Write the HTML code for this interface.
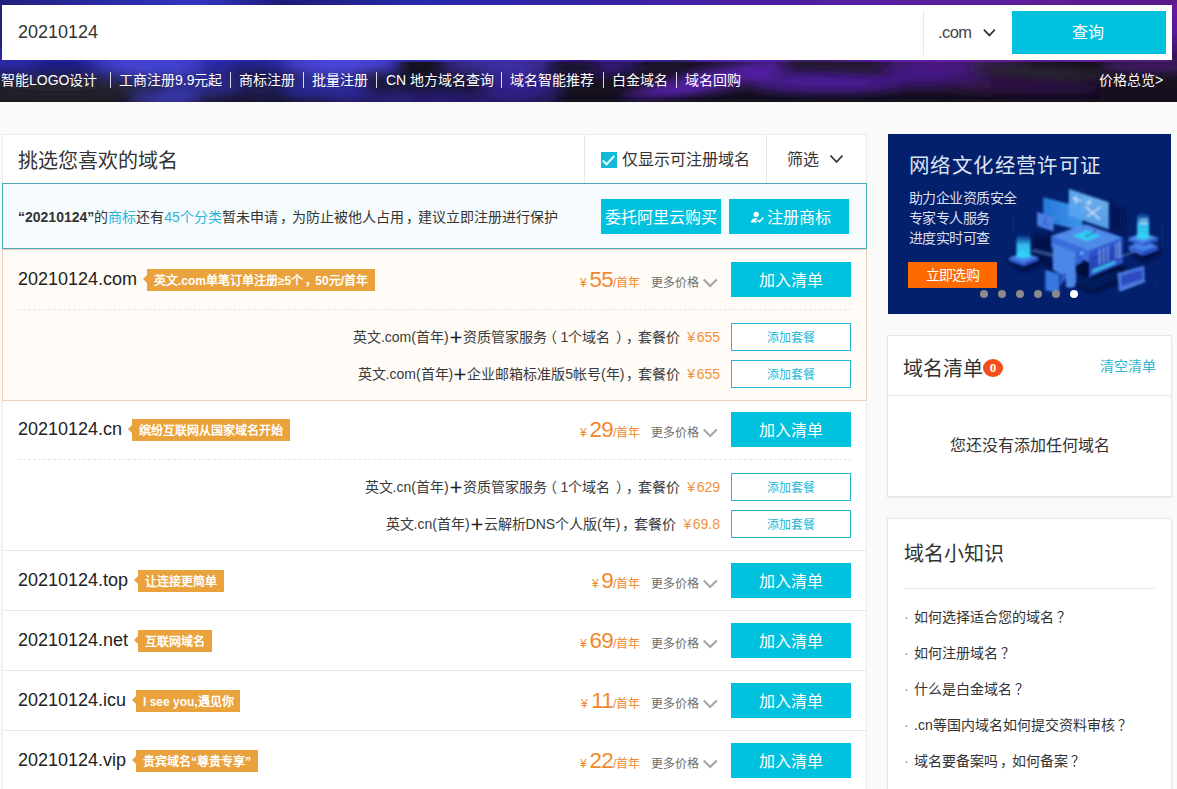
<!DOCTYPE html>
<html lang="zh-CN">
<head>
<meta charset="utf-8">
<title>域名查询</title>
<style>
*{box-sizing:border-box;margin:0;padding:0}
html,body{width:1177px;height:789px;overflow:hidden}
body{text-spacing-trim:space-all;font-family:"Liberation Sans",sans-serif;background:#fafafa;color:#333;position:relative;font-size:14px}
.abs{position:absolute}
.nw{white-space:nowrap}

/* ---------- header ---------- */
#hdr{left:0;top:0;width:1177px;height:102px;overflow:hidden;background:#15101f}
#hdr .bg{left:0;top:0}
#sbox{left:2px;top:5px;width:1170px;height:55px;background:#fff}
#sbox .q{left:16px;top:16px;font-size:18px;line-height:22px;color:#333}
#sbox .dv{left:921px;top:6px;width:1px;height:44px;background:#e8e8e8}
#sbox .tld{left:936px;top:16px;font-size:16.5px;letter-spacing:-.55px;line-height:22px;color:#444}
#sbox .btn{left:1010px;top:6px;width:154px;height:43px;background:#00c1de;color:#fff;font-size:16px;line-height:43px;text-align:center;padding-right:2px}
#nav{left:0;top:70px;width:1177px;height:20px;color:#fff;font-size:14px;line-height:20px}
#nav span{position:absolute;top:0;white-space:nowrap}
#nav i{position:absolute;top:2px;width:1px;height:16px;background:#d8d8e8}

/* ---------- main panel ---------- */
#main{left:2px;top:134px;width:865px;height:660px;background:#fff;border:1px solid #ebebeb;border-bottom:none}
#ttl{left:18px;top:147px;font-size:20px;line-height:28px;color:#333}
.vd{width:1px;background:#e8e8e8}
#cb{left:601px;top:152px;width:16px;height:16px;background:#12b9d9}
#cbt{left:622px;top:149px;font-size:16px;line-height:22px;color:#333}
#flt{left:787px;top:149px;font-size:16px;line-height:22px;color:#333}
#note{left:2px;top:183px;width:865px;height:66px;background:#f6fcfe;border:1px solid #49a9b8}
#notet{left:18px;top:207px;font-size:14px;line-height:20px;color:#333}
#notet b{font-weight:bold}
#notet a{color:#28b5d6;text-decoration:none}
.cbtn{background:#00c1de;color:#fff;font-size:16px;text-align:center;white-space:nowrap}
.row{left:3px;width:863px;border-bottom:1px solid #e8e8e8}
.dn{left:18px;font-size:18px;line-height:24px;color:#222;white-space:nowrap}
.tag{height:22px;background:#eaa23c;color:#fff;font-size:12px;line-height:24px;font-weight:bold;white-space:nowrap;padding:0 0 0 7px}
.tag:before{content:"";position:absolute;left:-4px;top:6px;border-top:4.5px solid transparent;border-bottom:4.5px solid transparent;border-right:4px solid #eaa23c}
.yen{font-size:12px;line-height:14px;color:#f0892e;white-space:nowrap}
.pr{font-size:22.4px;letter-spacing:-.7px;line-height:26px;color:#f0892e;text-align:right;white-space:nowrap}
.per{left:613px;font-size:12px;line-height:16px;color:#f0892e;white-space:nowrap}
.more{left:651px;font-size:12px;line-height:16px;color:#6c6c6c;white-space:nowrap}
.add{left:731px;width:120px;height:35px;line-height:37px}
.dash{left:18px;width:834px;height:0;border-top:1px dashed #e5e5e5}
.pk{font-size:14px;line-height:20px;color:#3a3a3a;white-space:nowrap;text-align:right;left:200px;width:520px}
.pk em{font-style:normal;color:#f0923c;margin-left:7px}
.pk b{font-weight:bold;font-size:14px;color:#222}
u{text-decoration:none;position:relative}
u.c{left:2px}
u.q{left:3px}
u.l{left:-4px}
u.r{left:6px}
.pk em u{letter-spacing:1.5px}
.pb{left:731px;width:120px;height:28px;border:1px solid #29b6d3;background:#fff;color:#1fb6d6;font-size:12px;line-height:28px;text-align:center}

/* ---------- sidebar ---------- */
#ban{left:888px;top:134px;width:283px;height:180px;background:#03206c;overflow:hidden}
#ban .t1{left:21px;top:17px;font-size:20.5px;letter-spacing:1.4px;line-height:30px;color:#dde2f0;white-space:nowrap}
#ban .t2{left:21px;font-size:14px;letter-spacing:-.55px;line-height:20px;color:#d9dfee;white-space:nowrap}
#ban .ob{left:20px;top:128px;width:89px;height:26px;background:#ff6a00;color:#fff;font-size:14px;letter-spacing:-.55px;line-height:26px;text-align:center}
#ban .dot{width:8px;height:8px;border-radius:50%;background:#8a8a8a;top:156px}
.card{background:#fff;border:1px solid #e6e6e6;box-shadow:0 1px 2px rgba(0,0,0,.06)}
#c1{left:887px;top:335px;width:285px;height:162px}
#c1t{left:903px;top:355px;font-size:20px;line-height:28px;color:#333}
#bdg{left:983px;top:359px;width:20px;height:18px;border-radius:10px/9px;background:#f54d1c;color:#fff;font-family:"Liberation Serif",serif;font-weight:bold;font-size:13px;line-height:17px;text-align:center}
#c1c{left:1100px;top:356px;font-size:14px;line-height:20px;color:#2db6d2}
#c1e{left:888px;top:435px;width:283px;text-align:center;font-size:16px;line-height:22px;color:#333}
#c2{left:887px;top:518px;width:285px;height:290px}
#c2t{left:904px;top:540px;font-size:20px;line-height:28px;color:#333}
.kl{left:904px;font-size:14px;line-height:20px;color:#333;white-space:nowrap}
.kl i{font-style:normal;color:#888;display:inline-block;width:10px}
</style>
</head>
<body>

<div id="hdr" class="abs">
  <svg class="abs bg" width="1177" height="102" viewBox="0 0 1177 102">
    <defs>
      <filter id="b1" x="-30%" y="-100%" width="160%" height="300%"><feGaussianBlur stdDeviation="7"/></filter>
      <filter id="b2" x="-30%" y="-100%" width="160%" height="300%"><feGaussianBlur stdDeviation="4"/></filter>
      <linearGradient id="hb" x1="0" y1="0" x2="1" y2="0">
        <stop offset="0" stop-color="#20207e"/><stop offset=".17" stop-color="#3434c2"/><stop offset=".24" stop-color="#1c1c78"/>
        <stop offset=".36" stop-color="#2a2aac"/><stop offset=".5" stop-color="#3424a4"/><stop offset=".62" stop-color="#4a20a2"/>
        <stop offset=".8" stop-color="#5a1e9e"/><stop offset="1" stop-color="#5c1a8c"/>
      </linearGradient>
      <linearGradient id="rs" x1="0" y1="0" x2="0" y2="1"><stop offset="0" stop-color="#6a1aa2"/><stop offset=".5" stop-color="#5a189a"/><stop offset="1" stop-color="#32124c"/></linearGradient>
    </defs>
    <rect width="1177" height="102" fill="#17121f"/>
    <rect width="1177" height="62" fill="url(#hb)"/>
    <rect x="1170" y="4" width="8" height="58" fill="url(#rs)"/>
    <g filter="url(#b1)">
      <!-- blue band under search box, left -->
      <rect x="-20" y="52" width="420" height="20" fill="#2a2ab4"/>
      <ellipse cx="150" cy="66" rx="55" ry="9" fill="#4848e6"/>
      <ellipse cx="340" cy="64" rx="55" ry="10" fill="#5048ea"/>
      <ellipse cx="60" cy="64" rx="30" ry="7" fill="#1c1c8c"/>
      <ellipse cx="250" cy="66" rx="22" ry="7" fill="#20208e"/>
      <ellipse cx="200" cy="86" rx="50" ry="12" fill="#2a2a8c"/>
      <ellipse cx="165" cy="100" rx="36" ry="6" fill="#4040c4"/>
      <ellipse cx="322" cy="88" rx="50" ry="12" fill="#2c2c9c"/>
      <ellipse cx="60" cy="88" rx="90" ry="12" fill="#26262f"/>
      <ellipse cx="130" cy="84" rx="40" ry="7" fill="#26263c"/>
      <ellipse cx="262" cy="90" rx="24" ry="11" fill="#1a1a52"/>
      <ellipse cx="392" cy="92" rx="22" ry="9" fill="#1a1a40"/>
      <!-- mid purple-blue -->
      <ellipse cx="500" cy="64" rx="60" ry="9" fill="#4232b4"/>
      <ellipse cx="520" cy="84" rx="44" ry="10" fill="#34249a"/>
      <ellipse cx="450" cy="101" rx="120" ry="5" fill="#3222a0"/>
      <ellipse cx="438" cy="84" rx="34" ry="9" fill="#16132a"/>
      <ellipse cx="600" cy="66" rx="45" ry="7" fill="#3a1c92"/>
      <!-- purple diagonal streak -->
      <ellipse cx="705" cy="82" rx="90" ry="10" fill="#5a22b4" transform="rotate(-14 705 82)"/>
      <ellipse cx="830" cy="82" rx="80" ry="11" fill="#4c1c9c"/>
      <ellipse cx="930" cy="76" rx="60" ry="10" fill="#45188a"/>
      <ellipse cx="1010" cy="84" rx="70" ry="9" fill="#34124e"/>
      <ellipse cx="950" cy="60" rx="80" ry="4" fill="#6a22b0"/>
      <ellipse cx="1050" cy="88" rx="60" ry="7" fill="#2c1046"/>
    </g>
    <g filter="url(#b2)">
      <ellipse cx="835" cy="66" rx="55" ry="4" fill="#2a1c34" transform="rotate(6 835 66)"/>
      <ellipse cx="1040" cy="72" rx="70" ry="5" fill="#2c2832" transform="rotate(4 1040 72)"/>
      <ellipse cx="575" cy="68" rx="26" ry="5" fill="#15101f"/>
      <ellipse cx="655" cy="70" rx="40" ry="4" fill="#1c1430" transform="rotate(-14 655 70)"/>
      <rect x="560" y="99" width="640" height="10" fill="#110d18"/>
      <rect x="1100" y="80" width="90" height="30" fill="#120e1a"/>
      <ellipse cx="1150" cy="66" rx="50" ry="6" fill="#451a6c"/>
      <rect x="-10" y="97" width="125" height="8" fill="#1e1e26"/>
    </g>
  </svg>

  <div id="sbox" class="abs">
    <div class="abs q nw">20210124</div>
    <div class="abs dv"></div>
    <div class="abs tld nw">.com</div>
    <svg class="abs" style="left:980px;top:23px" width="16" height="10" viewBox="0 0 16 10"><path d="M1.9 1.6 L7.4 7.4 L12.9 1.6" fill="none" stroke="#333" stroke-width="1.7"/></svg>
    <div class="abs btn">查询</div>
  </div>
  <div id="nav" class="abs">
    <span style="left:1px">智能LOGO设计</span><i style="left:110px"></i>
    <span style="left:119px">工商注册9.9元起</span><i style="left:230px"></i>
    <span style="left:239px">商标注册</span><i style="left:303px"></i>
    <span style="left:312px">批量注册</span><i style="left:376px"></i>
    <span style="left:386px">CN 地方域名查询</span><i style="left:501px"></i>
    <span style="left:510px">域名智能推荐</span><i style="left:603px"></i>
    <span style="left:612px">白金域名</span><i style="left:676px"></i>
    <span style="left:685px">域名回购</span>
    <span style="left:1099px">价格总览&gt;</span>
    
  </div>
</div>

<div id="main" class="abs"></div>
<div id="ttl" class="abs nw">挑选您喜欢的域名</div>
<div class="abs vd" style="left:584px;top:135px;height:48px"></div>
<div class="abs vd" style="left:766px;top:135px;height:48px"></div>
<div id="cb" class="abs"><svg width="16" height="16" viewBox="0 0 16 16" style="display:block"><path d="M1.7 8.5 L5.6 12.3 L13.3 4" fill="none" stroke="#eaffff" stroke-width="2"/></svg></div>
<div id="cbt" class="abs nw">仅显示可注册域名</div>
<div id="flt" class="abs nw">筛选</div>
<svg class="abs" style="left:829px;top:154px" width="15" height="10" viewBox="0 0 15 10"><path d="M1.5 1.5 L7.5 8 L13.5 1.5" fill="none" stroke="#333" stroke-width="1.8"/></svg>

<div id="note" class="abs"></div>
<div id="notet" class="abs nw"><b>“20210124”</b>的<a>商标</a>还有<a>45个分类</a>暂未申请<u class="c">，</u>为防止被他人占用<u class="c">，</u>建议立即注册进行保护</div>
<div class="abs cbtn" style="left:601px;top:199px;width:120px;height:35px;line-height:37px">委托阿里云购买</div>
<div class="abs cbtn" style="left:729px;top:199px;width:120px;height:35px;line-height:37px;text-align:left;padding-left:38px">注册商标</div>
<svg class="abs" style="left:750px;top:211px" width="15" height="13" viewBox="0 0 15 13"><circle cx="6.2" cy="3.4" r="2.6" fill="#fff"/><path d="M1 11.4 C1 8.4 3 7.2 6 7.2 C6.6 7.2 7.2 7.3 7.6 7.5 L5.6 9.4 L7.4 11.4 Z" fill="#fff"/><path d="M7.4 9 L9.5 10.8 L13.4 6.6" fill="none" stroke="#fff" stroke-width="1.4"/></svg>

<!-- .com row (highlighted) -->
<div class="abs" style="left:2px;top:249px;width:865px;height:152px;background:#fffbf6;border:1px solid #f1cfbc"></div>
  <div class="abs dn" style="top:267px">20210124.com</div>
  <div class="abs tag" style="left:147px;top:269px;width:228px">英文.com单笔订单注册≥5个<u class="c">，</u>50元/首年</div>
  <div class="abs yen" style="left:580px;top:276px">¥</div>
  <div class="abs pr" style="left:480px;width:133px;top:267px">55</div>
  <div class="abs per" style="top:275px">/首年</div>
  <div class="abs more" style="top:275px">更多价格</div>
  <svg class="abs" style="left:702px;top:278px" width="17" height="11" viewBox="0 0 17 11"><path d="M1.7 1.5 L8.2 8 L14.7 1.5" fill="none" stroke="#a6a6a6" stroke-width="2.2"/></svg>
  <div class="abs cbtn add" style="top:262px">加入清单</div>
  <div class="abs dash" style="top:309px"></div>
  <div class="abs pk" style="top:327px">英文.com(首年)<b>＋</b>资质管家服务<u class="l">（</u>1个域名<u class="r">）</u><u class="c">，</u>套餐价<em><u>¥</u>655</em></div>
  <div class="abs pb" style="top:323px">添加套餐</div>
  <div class="abs pk" style="top:364px">英文.com(首年)<b>＋</b>企业邮箱标准版5帐号(年)<u class="c">，</u>套餐价<em><u>¥</u>655</em></div>
  <div class="abs pb" style="top:360px">添加套餐</div>

<!-- .cn row -->
<div class="abs row" style="top:401px;height:150px"></div>
  <div class="abs dn" style="top:417px">20210124.cn</div>
  <div class="abs tag" style="left:132px;top:419px;width:158px">缤纷互联网从国家域名开始</div>
  <div class="abs yen" style="left:580px;top:426px">¥</div>
  <div class="abs pr" style="left:480px;width:133px;top:417px">29</div>
  <div class="abs per" style="top:425px">/首年</div>
  <div class="abs more" style="top:425px">更多价格</div>
  <svg class="abs" style="left:702px;top:428px" width="17" height="11" viewBox="0 0 17 11"><path d="M1.7 1.5 L8.2 8 L14.7 1.5" fill="none" stroke="#a6a6a6" stroke-width="2.2"/></svg>
  <div class="abs cbtn add" style="top:412px">加入清单</div>
  <div class="abs dash" style="top:459px"></div>
  <div class="abs pk" style="top:477px">英文.cn(首年)<b>＋</b>资质管家服务<u class="l">（</u>1个域名<u class="r">）</u><u class="c">，</u>套餐价<em><u>¥</u>629</em></div>
  <div class="abs pb" style="top:473px">添加套餐</div>
  <div class="abs pk" style="top:514px">英文.cn(首年)<b>＋</b>云解析DNS个人版(年)<u class="c">，</u>套餐价<em><u>¥</u>69.8</em></div>
  <div class="abs pb" style="top:510px">添加套餐</div>

<div class="abs row" style="top:551px;height:60px"></div>
  <div class="abs dn" style="top:568px">20210124.top</div>
  <div class="abs tag" style="left:138px;top:570px;width:86px">让连接更简单</div>
  <div class="abs yen" style="left:592px;top:577px">¥</div>
  <div class="abs pr" style="left:480px;width:133px;top:568px">9</div>
  <div class="abs per" style="top:576px">/首年</div>
  <div class="abs more" style="top:576px">更多价格</div>
  <svg class="abs" style="left:702px;top:579px" width="17" height="11" viewBox="0 0 17 11"><path d="M1.7 1.5 L8.2 8 L14.7 1.5" fill="none" stroke="#a6a6a6" stroke-width="2.2"/></svg>
  <div class="abs cbtn add" style="top:563px">加入清单</div>
<div class="abs row" style="top:611px;height:60px"></div>
  <div class="abs dn" style="top:628px">20210124.net</div>
  <div class="abs tag" style="left:138px;top:630px;width:74px">互联网域名</div>
  <div class="abs yen" style="left:580px;top:637px">¥</div>
  <div class="abs pr" style="left:480px;width:133px;top:628px">69</div>
  <div class="abs per" style="top:636px">/首年</div>
  <div class="abs more" style="top:636px">更多价格</div>
  <svg class="abs" style="left:702px;top:639px" width="17" height="11" viewBox="0 0 17 11"><path d="M1.7 1.5 L8.2 8 L14.7 1.5" fill="none" stroke="#a6a6a6" stroke-width="2.2"/></svg>
  <div class="abs cbtn add" style="top:623px">加入清单</div>
<div class="abs row" style="top:671px;height:60px"></div>
  <div class="abs dn" style="top:688px">20210124.icu</div>
  <div class="abs tag" style="left:136px;top:690px;width:104px">I see you,遇见你</div>
  <div class="abs yen" style="left:581px;top:697px">¥</div>
  <div class="abs pr" style="left:480px;width:133px;top:688px">11</div>
  <div class="abs per" style="top:696px">/首年</div>
  <div class="abs more" style="top:696px">更多价格</div>
  <svg class="abs" style="left:702px;top:699px" width="17" height="11" viewBox="0 0 17 11"><path d="M1.7 1.5 L8.2 8 L14.7 1.5" fill="none" stroke="#a6a6a6" stroke-width="2.2"/></svg>
  <div class="abs cbtn add" style="top:683px">加入清单</div>
<div class="abs row" style="top:731px;height:60px"></div>
  <div class="abs dn" style="top:748px">20210124.vip</div>
  <div class="abs tag" style="left:136px;top:750px;width:122px">贵宾域名“尊贵专享”</div>
  <div class="abs yen" style="left:580px;top:757px">¥</div>
  <div class="abs pr" style="left:480px;width:133px;top:748px">22</div>
  <div class="abs per" style="top:756px">/首年</div>
  <div class="abs more" style="top:756px">更多价格</div>
  <svg class="abs" style="left:702px;top:759px" width="17" height="11" viewBox="0 0 17 11"><path d="M1.7 1.5 L8.2 8 L14.7 1.5" fill="none" stroke="#a6a6a6" stroke-width="2.2"/></svg>
  <div class="abs cbtn add" style="top:743px">加入清单</div>

<div id="ban" class="abs">
  <svg class="abs" style="left:0;top:0" width="283" height="180" viewBox="0 0 283 180">
  <defs><filter id="ib" x="-20%" y="-20%" width="140%" height="140%"><feGaussianBlur stdDeviation="0.85"/></filter><filter id="ig" x="-50%" y="-50%" width="200%" height="200%"><feGaussianBlur stdDeviation="2.2"/></filter><linearGradient id="gp1" x1="0" y1="0" x2="1" y2="0"><stop offset="0" stop-color="#2a7ce0"/><stop offset="1" stop-color="#3f9cf0"/></linearGradient><linearGradient id="gp2" x1="0" y1="0" x2="0" y2="1"><stop offset="0" stop-color="#7cc0f8"/><stop offset="1" stop-color="#5aa4ee"/></linearGradient><linearGradient id="gcy" x1="0" y1="0" x2="0" y2="1"><stop offset="0" stop-color="#1a78d0" stop-opacity=".2"/><stop offset=".45" stop-color="#35b8ee"/><stop offset="1" stop-color="#2fd0f4"/></linearGradient></defs>
  <g filter="url(#ig)">
  <polygon points="161.4,138.3 204.3,159.7 237.2,146.5 237.2,131.7 201.0,123.5 161.4,128.4" fill="#020d3c"/>
  <polygon points="143.3,100.4 164.7,100.4 164.7,135.0 143.3,128.4" fill="#031048" opacity="0.85"/>
  <polygon points="220.8,67.4 237.2,75.7 237.2,102.0 220.8,95.4" fill="#031250" opacity="0.7"/>
  <polygon points="120.2,128.4 136.7,138.3 153.2,130.0 153.2,123.5 120.2,123.5" fill="#020f42"/>
  <polygon points="240.5,118.5 257.0,128.4 271.9,120.2 271.9,113.6 240.5,113.6" fill="#020f42"/>
  </g>
  <g filter="url(#ib)">
  <polygon points="186.2,138.3 204.3,144.9 230.7,135.0 230.7,144.9 204.3,156.4 186.2,149.8" fill="#06205e" opacity="0.9"/>
  <polygon points="155.2,63.3 194.4,73.2 194.4,97.1 155.2,87.2" fill="url(#gp1)" opacity="0.95"/>
  <polygon points="180.9,55.1 220.8,68.2 220.8,95.4 180.9,81.4" fill="url(#gp2)" opacity="0.92"/>
  <polygon points="180.9,55.1 194.4,59.5 194.4,85.6 180.9,81.4" fill="#4a9cf0" opacity="0.55"/>
  <path d="M197.7 68.2 l5 1.8 M201.8 65.8 l0 5 M197.7 72.4 l14 13 M212.5 73.2 l-13 9 M184.5 64.1 l9 3 M187.8 61.7 l0 8" stroke="#e8f4ff" stroke-width="1.3" fill="none" opacity=".85"/>
  <polygon points="149.1,78.1 165.6,83.1 165.6,97.4 149.1,91.8" fill="#4c7fe4"/>
  <line x1="157.3" y1="83.1" x2="157.3" y2="90.5" stroke="#2a56c8" stroke-width="1.2" opacity="1"/>
  <line x1="154.0" y1="89.2" x2="161.1" y2="91.5" stroke="#2a56c8" stroke-width="1.2" opacity="1"/>
  <polygon points="163.1,102.0 201.0,116.9 201.0,128.4 163.1,112.7" fill="#3a6cdc"/>
  <polygon points="201.0,116.9 234.8,103.7 234.8,129.2 201.0,143.6" fill="#2f52cc"/>
  <polygon points="163.1,102.0 197.7,90.2 234.8,103.7 201.0,116.9" fill="#4f8cea"/>
  <polygon points="201.0,123.5 234.8,110.3 234.8,123.5 201.0,137.0" fill="#2846b8"/>
  <line x1="211.7" y1="115.2" x2="211.7" y2="130.8" stroke="#9cc8ff" stroke-width="1.0" opacity="0.9"/>
  <line x1="215.8" y1="113.5" x2="215.8" y2="129.2" stroke="#9cc8ff" stroke-width="1.0" opacity="0.9"/>
  <line x1="219.9" y1="111.9" x2="219.9" y2="127.6" stroke="#9cc8ff" stroke-width="1.0" opacity="0.9"/>
  <line x1="228.2" y1="108.7" x2="228.2" y2="124.4" stroke="#9cc8ff" stroke-width="1.0" opacity="0.9"/>
  <line x1="231.5" y1="107.4" x2="231.5" y2="123.1" stroke="#9cc8ff" stroke-width="1.0" opacity="0.9"/>
  <polygon points="204.3,135.8 227.4,126.4 227.4,129.7 204.3,139.3" fill="#38c4f0" opacity="0.9"/>
  <polygon points="164.7,109.4 187.8,118.5 187.8,149.0 164.7,135.8" fill="#4b86e8"/>
  <polygon points="187.8,118.5 194.4,116.0 194.4,128.4 187.8,131.7" fill="#3560d0"/>
  <polygon points="157.3,135.8 171.3,139.9 171.3,159.7 157.3,156.1" fill="#3878e2"/>
  <polygon points="172.2,139.9 186.2,138.3 186.2,152.3 181.2,154.8 177.9,144.9 172.2,151.5" fill="#2e5ad0"/>
  <polygon points="177.9,138.3 187.0,138.3 187.0,153.1 177.9,153.1" fill="#4b86e8"/>
  <polygon points="184.5,101.7 198.5,96.3 212.9,101.5 199.3,107.3" fill="#35ccf4"/>
  <polygon points="197.7,102.9 206.8,99.1 208.4,93.8 207.3,93.8 205.9,98.4 196.9,102.0" fill="#1f3a9a"/>
  <ellipse cx="193.6" cy="119.3" rx="1.6" ry="1.2" fill="#5fd8fa" opacity="1"/>
  <polygon points="121.1,123.5 135.9,118.5 150.7,123.5 135.9,129.2" fill="#4584ea"/>
  <polygon points="121.1,123.5 135.9,129.2 135.9,132.5 121.1,126.8" fill="#3463d4"/>
  <polygon points="135.9,129.2 150.7,123.5 150.7,126.8 135.9,132.5" fill="#2a50c4"/>
  <rect x="128.5" y="101.2" width="14.0" height="20.6" rx="2" fill="url(#gcy)"/>
  <ellipse cx="135.4" cy="121.5" rx="7.3" ry="2.6" fill="#33d2f6" opacity="1"/>
  <line x1="144.1" y1="116.9" x2="164.7" y2="122.1" stroke="#7fb2f4" stroke-width="1.0" opacity="0.8"/>
  <line x1="145.8" y1="115.2" x2="164.7" y2="120.2" stroke="#7fb2f4" stroke-width="1.0" opacity="0.6"/>
  <line x1="229.8" y1="123.5" x2="248.8" y2="117.2" stroke="#7fb2f4" stroke-width="1.0" opacity="0.8"/>
  <polygon points="240.5,111.9 255.4,107.3 270.2,111.9 255.4,117.2" fill="#4584ea"/>
  <polygon points="240.5,111.9 255.4,117.2 255.4,122.1 240.5,116.5" fill="#3463d4"/>
  <polygon points="255.4,117.2 270.2,111.9 270.2,116.5 255.4,122.1" fill="#2a50c4"/>
  <polygon points="240.5,103.7 255.4,99.1 270.2,103.7 255.4,109.0" fill="#4f8cea"/>
  <polygon points="240.5,103.7 255.4,109.0 255.4,112.2 240.5,107.0" fill="#3a6cdc"/>
  <polygon points="255.4,109.0 270.2,103.7 270.2,107.0 255.4,112.2" fill="#2f52cc"/>
  <path d="M249.1 81.4 L255.0 78.6 L261.1 81.4 L261.1 102.9 L249.1 102.9 Z" fill="url(#gcy)"/>
  <ellipse cx="255.0" cy="102.9" rx="6.3" ry="2.3" fill="#33d2f6" opacity="1"/>
  <path d="M252.1 85.6 h5 M252.1 89.2 h5 M255.7 85.6 h4 M255.7 89.2 h4" stroke="#dff6ff" stroke-width="1.4" opacity=".8"/>
  <polygon points="229.8,139.1 256.2,131.7 256.7,146.5 230.7,155.6" fill="#4a78e0"/>
  <polygon points="233.1,141.6 254.1,135.5 254.4,144.9 233.6,152.0" fill="#2e4cc0"/>
  <polygon points="230.7,155.6 256.7,146.5 257.8,147.8 232.0,157.4" fill="#5f90ea"/>
  </g>
  <line x1="125.2" y1="83.9" x2="125.2" y2="98.7" stroke="#2a50b0" stroke-width="0.8" stroke-dasharray="1.5 2.5" opacity=".8"/>
  <line x1="232.3" y1="79.8" x2="232.3" y2="90.5" stroke="#2a50b0" stroke-width="0.8" stroke-dasharray="1.5 2.5" opacity=".8"/>
  <line x1="274.3" y1="90.5" x2="274.3" y2="111.9" stroke="#2a50b0" stroke-width="0.8" stroke-dasharray="1.5 2.5" opacity=".8"/>
  <line x1="267.7" y1="144.9" x2="267.7" y2="151.5" stroke="#2a50b0" stroke-width="0.8" stroke-dasharray="1.5 2.5" opacity=".8"/>
  </svg>
  <div class="abs t1">网络文化经营许可证</div>
  <div class="abs t2" style="top:54px">助力企业资质安全</div>
  <div class="abs t2" style="top:74px">专家专人服务</div>
  <div class="abs t2" style="top:94px">进度实时可查</div>
  <div class="abs ob">立即选购</div>
  <div class="abs dot" style="left:92px"></div><div class="abs dot" style="left:110px"></div><div class="abs dot" style="left:128px"></div><div class="abs dot" style="left:146px"></div><div class="abs dot" style="left:164px"></div><div class="abs dot" style="left:182px;background:#fff"></div>
</div>

<div id="c1" class="abs card"></div>
<div id="c1t" class="abs nw">域名清单</div>
<div id="bdg" class="abs">0</div>
<div id="c1c" class="abs nw">清空清单</div>
<div class="abs" style="left:888px;top:395px;width:283px;height:1px;background:#ebebeb"></div>
<div id="c1e" class="abs nw">您还没有添加任何域名</div>

<div id="c2" class="abs card"></div>
<div id="c2t" class="abs nw">域名小知识</div>
<div class="abs" style="left:904px;top:588px;width:251px;height:1px;background:#e6e6e6"></div>
<div class="abs kl" style="top:607px"><i>·</i>如何选择适合您的域名<u class="q">？</u></div>
<div class="abs kl" style="top:643px"><i>·</i>如何注册域名<u class="q">？</u></div>
<div class="abs kl" style="top:679px"><i>·</i>什么是白金域名<u class="q">？</u></div>
<div class="abs kl" style="top:715px"><i>·</i>.cn等国内域名如何提交资料审核<u class="q">？</u></div>
<div class="abs kl" style="top:751px"><i>·</i>域名要备案吗<u class="c">，</u>如何备案<u class="q">？</u></div>

</body>
</html>
